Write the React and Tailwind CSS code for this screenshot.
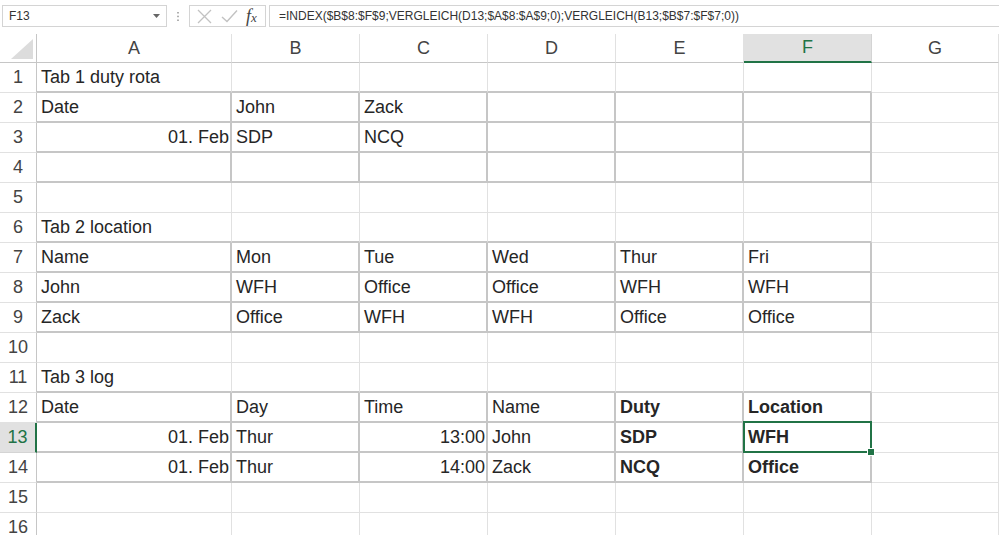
const COLS = ['A', 'B', 'C', 'D', 'E', 'F', 'G']
const ROWS = Array.from({ length: 16 }, (_, i) => i + 1)

// rows inside bordered tables, and rows just above them (their bottom edge is the table top)
const TABLE_ROWS = [2, 3, 4, 7, 8, 9, 12, 13, 14]
const ABOVE_ROWS = [1, 6, 11]

const r = (t) => ({ t, right: true })
const b = (t) => ({ t, bold: true })

const data = {
  1: { A: 'Tab 1 duty rota' },
  2: { A: 'Date', B: 'John', C: 'Zack' },
  3: { A: r('01. Feb'), B: 'SDP', C: 'NCQ' },
  6: { A: 'Tab 2 location' },
  7: { A: 'Name', B: 'Mon', C: 'Tue', D: 'Wed', E: 'Thur', F: 'Fri' },
  8: { A: 'John', B: 'WFH', C: 'Office', D: 'Office', E: 'WFH', F: 'WFH' },
  9: { A: 'Zack', B: 'Office', C: 'WFH', D: 'WFH', E: 'Office', F: 'Office' },
  11: { A: 'Tab 3 log' },
  12: { A: 'Date', B: 'Day', C: 'Time', D: 'Name', E: b('Duty'), F: b('Location') },
  13: { A: r('01. Feb'), B: 'Thur', C: r('13:00'), D: 'John', E: b('SDP'), F: b('WFH') },
  14: { A: r('01. Feb'), B: 'Thur', C: r('14:00'), D: 'Zack', E: b('NCQ'), F: b('Office') },
}

const FORMULA = '=INDEX($B$8:$F$9;VERGLEICH(D13;$A$8:$A$9;0);VERGLEICH(B13;$B$7:$F$7;0))'

function FormulaBar() {
  return (
    <div className="flex items-start h-[34px] pl-[2px] pt-[5px] text-[12px] text-[#333]">
      {/* Name box */}
      <div className="w-[165px] h-[22px] border border-[#d4d4d4] flex items-center justify-between pl-[6px] pr-[6px]">
        <span>F13</span>
        <svg width="7" height="4" viewBox="0 0 7 4">
          <polygon points="0,0 7,0 3.5,4" fill="#666" />
        </svg>
      </div>
      {/* grip dots */}
      <div className="w-[22px] h-[22px] flex items-center justify-center">
        <svg width="2" height="9" viewBox="0 0 2 9">
          <rect x="0" y="0" width="2" height="1.5" fill="#b0b0b0" />
          <rect x="0" y="3.7" width="2" height="1.5" fill="#b0b0b0" />
          <rect x="0" y="7.5" width="2" height="1.5" fill="#b0b0b0" />
        </svg>
      </div>
      {/* cancel / enter / fx */}
      <div className="w-[77px] h-[22px] border border-[#d4d4d4] flex items-center pl-[7px]">
        <svg width="15" height="15" viewBox="0 0 15 15">
          <path d="M1 1 L14 14 M14 1 L1 14" stroke="#c2c2c2" strokeWidth="1.3" fill="none" />
        </svg>
        <svg width="17" height="14" viewBox="0 0 17 14" className="ml-[9px]">
          <path d="M1 8 L6 12.5 L16 1.5" stroke="#c2c2c2" strokeWidth="1.4" fill="none" />
        </svg>
        <span className="ml-[8px] font-['Liberation_Serif',serif] italic text-[#444] leading-none">
          <span className="text-[18px]">f</span>
          <span className="text-[13px]">x</span>
        </span>
      </div>
      {/* formula input */}
      <div className="flex-1 ml-[3px] h-[22px] border border-r-0 border-[#d4d4d4] flex items-center pl-[9px] whitespace-nowrap">
        {FORMULA}
      </div>
    </div>
  )
}

function Cell({ row, col }) {
  const raw = data[row]?.[col]
  const v = typeof raw === 'string' ? { t: raw } : raw
  const bordered = col !== 'G'
  const inTable = bordered && TABLE_ROWS.includes(row)
  const above = bordered && ABOVE_ROWS.includes(row)
  const selected = row === 13 && col === 'F'

  const rightCls = inTable ? 'border-r-2 border-r-[#c6c6c6]' : 'border-r border-r-[#e1e1e1]'
  const bottomCls = inTable || above ? 'border-b-2 border-b-[#c6c6c6]' : 'border-b border-b-[#e1e1e1]'

  return (
    <div
      className={`relative h-[30px] flex items-center whitespace-nowrap ${rightCls} ${bottomCls} ${
        v?.right ? 'justify-end pr-[1px]' : 'pl-[4px]'
      } ${v?.bold ? 'font-bold' : ''}`}
    >
      {v?.t}
      {selected && (
        <div className="absolute z-10 -left-[1px] -top-[2px] -right-[2px] -bottom-[2px] border-2 border-[#217346]">
          <div className="absolute -right-[5px] -bottom-[5px] w-[8px] h-[8px] bg-[#217346] border border-white" />
        </div>
      )}
    </div>
  )
}

export default function App() {
  return (
    <div className="w-[999px] h-[535px] overflow-hidden bg-white font-['Liberation_Sans',Arial,sans-serif]">
      <FormulaBar />
      <div className="grid grid-cols-[37px_195px_128px_128px_128px_128px_128px_127px] text-[18px] text-[#262626]">
        {/* column header row */}
        <div className="h-[29px] border-r border-r-[#c6c6c6] border-b border-b-[#c6c6c6] flex items-end justify-end pr-[3px] pb-[3px]">
          <svg width="22" height="20" viewBox="0 0 22 20">
            <polygon points="0,20 22,20 22,0" fill="#dcdcdc" />
          </svg>
        </div>
        {COLS.map((c) =>
          c === 'F' ? (
            <div
              key={c}
              className="h-[29px] bg-[#e1e1e1] border-r border-r-[#d4d4d4] border-b-2 border-b-[#217346] flex items-center justify-center text-[#217346]"
            >
              {c}
            </div>
          ) : (
            <div
              key={c}
              className="h-[29px] border-r border-r-[#e1e1e1] border-b border-b-[#c6c6c6] flex items-center justify-center text-[#444]"
            >
              {c}
            </div>
          )
        )}

        {ROWS.map((row) => (
          <div key={row} className="contents">
            {row === 13 ? (
              <div className="h-[30px] bg-[#e1e1e1] border-r-2 border-r-[#217346] border-b border-b-[#d4d4d4] flex items-center justify-center text-[#217346]">
                {row}
              </div>
            ) : (
              <div className="h-[30px] border-r border-r-[#c6c6c6] border-b border-b-[#e1e1e1] flex items-center justify-center text-[#444]">
                {row}
              </div>
            )}
            {COLS.map((c) => (
              <Cell key={c} row={row} col={c} />
            ))}
          </div>
        ))}
      </div>
    </div>
  )
}
